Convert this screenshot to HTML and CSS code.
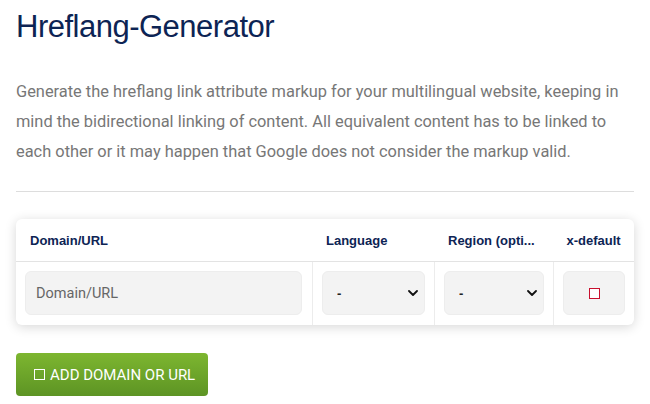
FILE: index.html
```html
<!DOCTYPE html>
<html lang="en">
<head>
  <meta charset="UTF-8" />
  <title>Hreflang-Generator</title>
  <link rel="stylesheet" href="styles.css">
</head>
<body>

  <h1 class="title">Hreflang-Generator</h1>
  <p class="intro">Generate the hreflang link attribute markup for your multilingual website, keeping in mind the bidirectional linking of content. All equivalent content has to be linked to each other or it may happen that Google does not consider the markup valid.</p>
  <hr class="divider" />

  <!-- Tabelle -->
  <div class="card">
    <div class="row head">
      <div class="cell">Domain/URL</div>
      <div class="cell">Language</div>
      <div class="cell">Region (opti...</div>
      <div class="cell center">x-default</div>
    </div>
    <div class="row body">
      <div class="cell">
        <input type="text" class="field" placeholder="Domain/URL" />
      </div>
      <div class="cell">
        <div class="select-wrap">
          <select class="field select"><option>-</option></select>
          <svg class="chevron" viewBox="0 0 10 6" aria-hidden="true"><polyline points="1,1 5,5 9,1" fill="none" stroke="#111" stroke-width="1.8" stroke-linecap="round" stroke-linejoin="round"/></svg>
        </div>
      </div>
      <div class="cell">
        <div class="select-wrap">
          <select class="field select"><option>-</option></select>
          <svg class="chevron" viewBox="0 0 10 6" aria-hidden="true"><polyline points="1,1 5,5 9,1" fill="none" stroke="#111" stroke-width="1.8" stroke-linecap="round" stroke-linejoin="round"/></svg>
        </div>
      </div>
      <div class="cell">
        <div class="field check-box"><span class="check"></span></div>
      </div>
    </div>
  </div>

  <button class="add-btn"><span class="box"></span>ADD DOMAIN OR URL</button>

</body>
</html>
```

FILE: styles.css
```css
* { box-sizing: border-box; }
body {
  margin: 0;
  padding: 0 16px;
  background: #fff;
  font-family: Roboto, 'Liberation Sans', sans-serif;
  color: #333;
}
.title {
  margin: 0;
  padding-top: 7px;
  font-family: 'Liberation Sans', Arial, sans-serif;
  font-weight: normal;
  font-size: 31px;
  line-height: 40px;
  letter-spacing: -0.5px;
  color: #0d2454;
}
.intro {
  margin: 30px 0 0;
  font-size: 16.4px;
  line-height: 30px;
  color: #777;
}
.divider {
  margin: 24px 0 0;
  border: none;
  border-top: 1px solid #ddd;
}
.card {
  margin-top: 27px;
  background: white;
  border-radius: 6px;
  box-shadow: 0 2px 12px rgba(0, 0, 0, 0.16);
  overflow: hidden;
}
.row {
  display: grid;
  grid-template-columns: 296px 122px 119px 1fr;
}
.head {
  height: 43px;
  align-items: center;
  border-bottom: 1px solid #e3e3e3;
  font-family: 'Liberation Sans', Arial, sans-serif;
  font-weight: bold;
  font-size: 13px;
  color: #0d2454;
}
.head .cell { padding: 0 14px; }
.head .center { text-align: center; padding: 0; }
.body .cell {
  padding: 9px 9px 10px;
  border-left: 1px solid #ececec;
}
.body .cell:first-child { border-left: none; padding-right: 10px; }
.field {
  display: block;
  width: 100%;
  height: 44px;
  background: #f3f3f3;
  border: 1px solid #ededed;
  border-radius: 6px;
  font-family: Roboto, sans-serif;
  font-size: 14.5px;
  color: #333;
}
input.field {
  padding: 0 10px;
}
input.field::placeholder { color: #666; }
.select-wrap { position: relative; }
.select {
  appearance: none;
  -webkit-appearance: none;
  padding: 0 14px;
  font-family: 'Liberation Sans', Arial, sans-serif;
  font-weight: bold;
  font-size: 13px;
  color: #222;
}
.chevron {
  position: absolute;
  right: 7px;
  top: 19px;
  width: 10px;
  height: 6px;
  pointer-events: none;
}
.check-box {
  display: flex;
  align-items: center;
  justify-content: center;
}
.check {
  width: 11px;
  height: 11px;
  border: 1.5px solid #c8102e;
  background: #fff;
}
.add-btn {
  display: flex;
  align-items: center;
  gap: 5px;
  margin-top: 28px;
  height: 43px;
  padding: 0 13px 0 18px;
  background: linear-gradient(to bottom, #7db630, #5d9424);
  border: none;
  border-radius: 4px;
  color: white;
  font-family: Roboto, sans-serif;
  font-size: 15px;
  cursor: pointer;
}
.add-btn .box {
  width: 11px;
  height: 11px;
  border: 1.5px solid white;
}
```
